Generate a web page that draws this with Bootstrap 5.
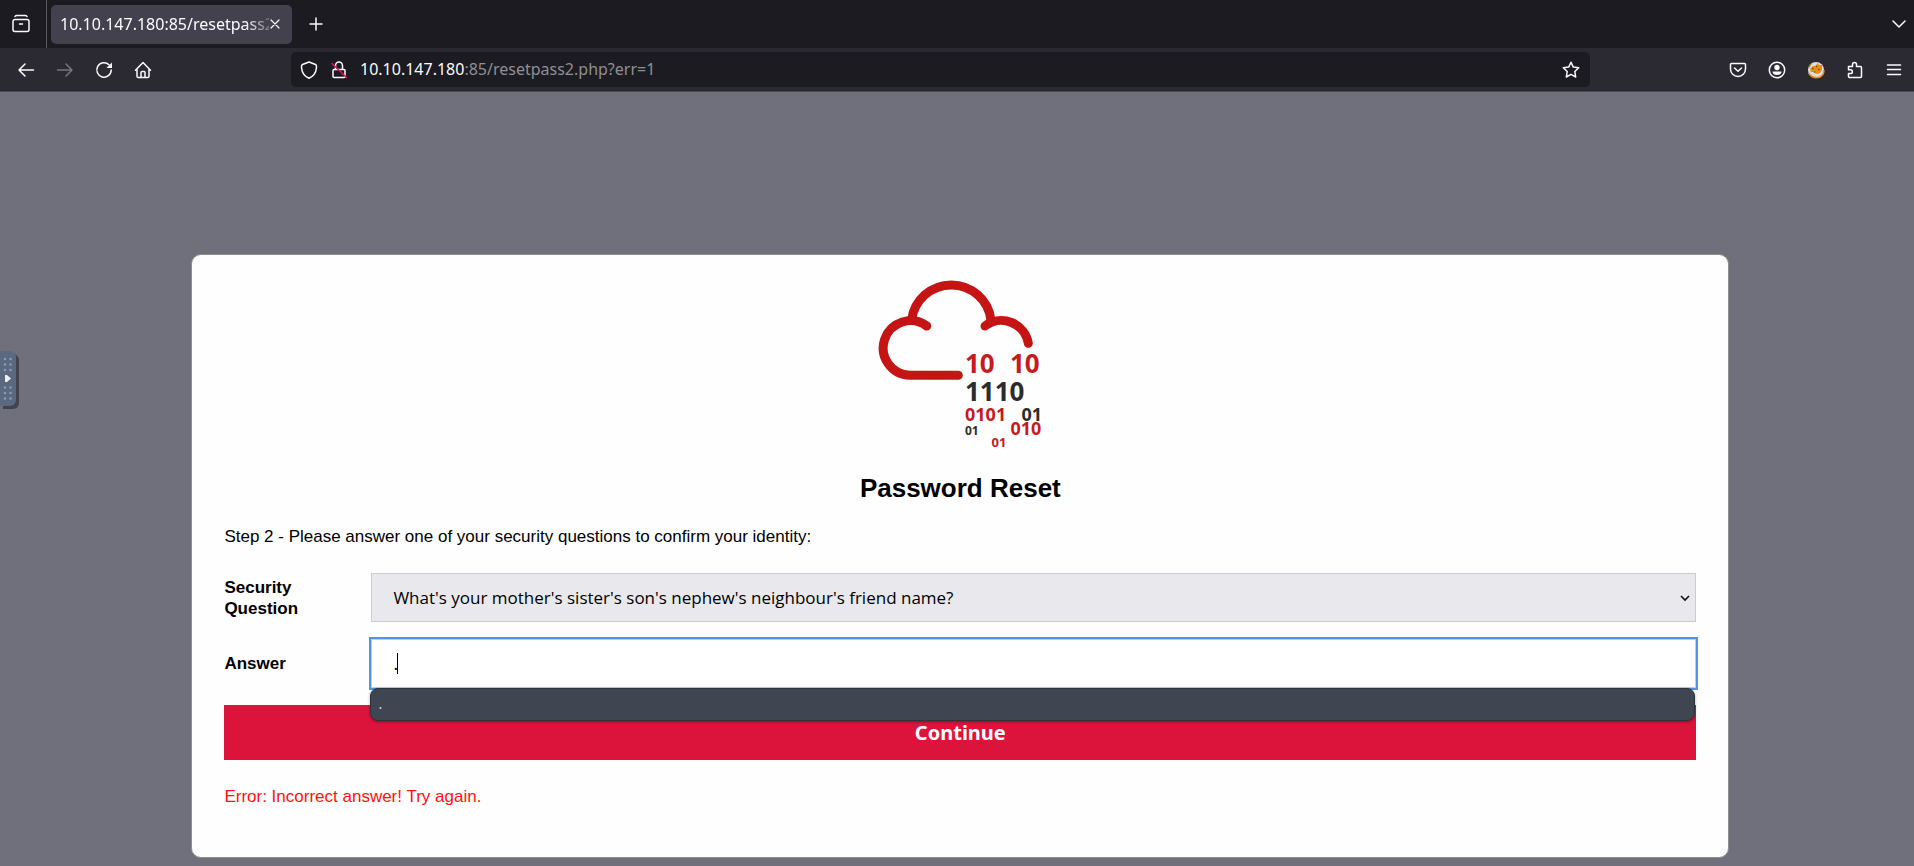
<!DOCTYPE html>
<html lang="en">
<head>
<meta charset="utf-8">
<meta name="viewport" content="width=device-width, initial-scale=1">
<title>Password Reset</title>
<link href="https://cdn.jsdelivr.net/npm/bootstrap@5.3.0/dist/css/bootstrap.min.css" rel="stylesheet">
<style>
  body { background: #70707c; color: #000; font-family: "Liberation Sans", Arial, sans-serif; font-size: 17px; line-height: 21px; }
  .ui-font { font-family: "Noto Sans", "Open Sans", sans-serif; }
  svg { display: block; flex: none; }

  /* browser window */
  .tab-strip { height: 48px; background: #1c1b22; color: #fbfbfe; }
  .tool-strip { height: 44px; background: #2b2a33; color: #fbfbfe; border-bottom: 1px solid #4a4956; }
  .icon-btn { width: 39px; height: 32px; padding: 0; border: 0; background: none; color: inherit; display: flex; align-items: center; justify-content: center; flex: none; }
  .icon-btn:disabled { color: #77767e; }
  .view-cell { width: 47px; border-right: 1px solid #5b5a63; }
  .page-tab { width: 241px; height: 39px; margin-left: 4px; padding: 0 9px; border-radius: 5px; background: #42414d; font-size: 16px; }
  .tab-title { width: 209px; -webkit-mask-image: linear-gradient(to right, #000 185px, transparent 218px); mask-image: linear-gradient(to right, #000 185px, transparent 218px); }
  .tab-close { width: 12px; }
  .nav-icons { width: 291px; padding-left: 6px; }
  .side-icons { width: 324px; padding-right: 1px; }
  .url-bar { height: 35px; border-radius: 5px; background: #1c1b22; font-size: 16px; padding-left: 9px; }
  .url-icon { width: 30px; }
  .url-rest { color: #8f8f94; }
  .line-icon { fill: none; stroke: currentColor; stroke-width: 1.5; stroke-linecap: round; stroke-linejoin: round; }

  /* reset form */
  .reset-card { width: 80.35%; margin: 162px 0 7px 10%; padding: 24px 32px 50px; background: #fefefe; border: 1px solid #8e8e8c; border-radius: 10px; }
  .reset-title { margin: 21px 0 22px; font-size: 26px; line-height: 32px; font-weight: 700; }
  .step-text { margin-bottom: 26px; }
  .field-row { margin-bottom: 17px; }
  .field-label { width: 147px; font-weight: 700; flex: none; }
  .field-box { height: 49px; border: 1px solid #ccc; border-radius: 0; padding: 0 21px; color: #000; font-size: 17px; }
  .question-box { appearance: none; font-family: "Open Sans", "Noto Sans", sans-serif; background: #e9e9ed url("data:image/svg+xml,%3Csvg xmlns='http://www.w3.org/2000/svg' viewBox='0 0 10 8'%3E%3Cpath d='M1 2l4 4 4-4' fill='none' stroke='%23111' stroke-width='1.6'/%3E%3C/svg%3E") no-repeat right 5px center / 10px 8px; }
  .answer-box { background: #fff; outline: 2px solid #5294e2; }
  .caret-line { left: 26px; top: 14px; width: 1px; height: 21px; background: #000; }
  .suggest-list { left: -1px; right: 1px; top: 49px; height: 33px; padding: 4px 7px; background: #404552; border: 1px solid #2f3240; border-radius: 8px; color: #d3dae3; font-size: 14px; box-shadow: 0 1px 3px rgba(0,0,0,.35); z-index: 2; }
  .suggest-item { color: inherit; line-height: 21px; }
  .continue-btn { height: 55px; border: 0; background: #dc143c; color: #fff; font-size: 20px; font-weight: 700; line-height: 28px; }
  .error-text { margin: 26px 0 0; color: #f11; }

  /* drawer handle on the left edge of the window */
  .drawer-handle { left: 0; top: 351px; width: 16px; height: 55px; border: 0; padding: 0; border-radius: 0 6px 6px 0; background: #5b6980; box-shadow: 3px 3px 0 #42434c; }
</style>
</head>
<body>
<header class="ui-font">
  <div class="tab-strip d-flex align-items-center">
    <div class="view-cell h-100 d-flex align-items-center">
      <button class="icon-btn w-100 pe-1" aria-label="View recent tabs"><svg class="line-icon" width="20" height="20" viewBox="0 0 20 20"><path d="M4 2.500C4.500 1.500 5 1.500 6 1.500H14C15 1.500 15.500 1.500 16 2.500M4 5.500H16A2 2 0 0 1 18 7.500V15.500A2 2 0 0 1 16 17.500H4A2 2 0 0 1 2 15.500V7.500A2 2 0 0 1 4 5.500ZM8.500 10H11.500"/></svg></button>
    </div>
    <div class="page-tab d-flex align-items-center">
      <span class="tab-title flex-shrink-0 text-nowrap overflow-hidden">10.10.147.180:85/resetpass2</span>
      <button class="icon-btn tab-close" aria-label="Close tab"><svg class="line-icon" width="10" height="10" viewBox="0 0 10 10"><path stroke-width="1.2" d="M1 1l8 8M9 1L1 9"/></svg></button>
    </div>
    <button class="icon-btn ms-1" aria-label="New tab"><svg class="line-icon" width="14" height="14" viewBox="0 0 14 14"><path d="M7 1v12M1 7h12"/></svg></button>
    <button class="icon-btn ms-auto" aria-label="List all tabs"><svg class="line-icon ms-2" width="14" height="8" viewBox="0 0 14 8"><path d="M1 1l6 6 6-6"/></svg></button>
  </div>
  <div class="tool-strip d-flex align-items-center">
    <nav class="nav-icons d-flex flex-shrink-0" aria-label="Navigation">
      <button class="icon-btn" aria-label="Back"><svg class="line-icon" width="18" height="16" viewBox="0 0 18 16"><path d="M8 2L2 8l6 6M2 8h14.500"/></svg></button>
      <button class="icon-btn" disabled aria-label="Forward"><svg class="line-icon" width="18" height="16" viewBox="0 0 18 16"><path d="M10 2l6 6-6 6M16 8H1.500"/></svg></button>
      <button class="icon-btn" aria-label="Reload"><svg class="line-icon" width="18" height="18" viewBox="0 0 18 18"><path d="M14 3.800A7.200 7.200 0 1 0 16.200 9"/><path fill="currentColor" stroke="none" d="M17 1.500V7H11.500Z"/></svg></button>
      <button class="icon-btn" aria-label="Home"><svg class="line-icon" width="18" height="18" viewBox="0 0 18 18"><path d="M1.500 9.200L9 1.500l7.500 7.700M3 8v7.500A1.200 1.200 0 0 0 4.200 16.500H13.800A1.200 1.200 0 0 0 15 15.500V8M7 16.500V11.500A1 1 0 0 1 8 10.500H10A1 1 0 0 1 11 11.500V16.500"/></svg></button>
    </nav>
    <div class="url-bar d-flex align-items-center flex-grow-1">
      <span class="url-icon"><svg class="line-icon" width="18" height="20" viewBox="0 0 18 20"><path d="M9 2L15.500 4.500C17 5.200 16.500 6 16.400 8C16 12.500 14.200 16 9 18.200C3.800 16 2 12.500 1.600 8C1.500 6 1 5.200 2.500 4.500Z"/></svg></span>
      <span class="url-icon"><svg class="line-icon" width="18" height="20" viewBox="0 0 18 20"><path d="M4 9.500H14A1 1 0 0 1 15 10.500V16.500A1 1 0 0 1 14 17.500H4A1 1 0 0 1 3 16.500V10.500A1 1 0 0 1 4 9.500ZM5.500 9.500V5.500A3.500 3.500 0 0 1 12.500 5.500V9.500"/><path stroke="#e3134a" d="M2 3.500L16.500 17.500"/></svg></span>
      <div class="flex-grow-1 text-nowrap" role="textbox" aria-label="Address">10.10.147.180<span class="url-rest">:85/resetpass2.php?err=1</span></div>
      <button class="icon-btn" aria-label="Bookmark this page"><svg class="line-icon" width="18" height="18" viewBox="0 0 18 18"><path d="M9 1.300L11.300 6.100L16.700 6.800L12.800 10.500L13.700 16L9 13.400L4.300 16L5.200 10.500L1.300 6.800L6.700 6.100Z"/></svg></button>
    </div>
    <div class="side-icons d-flex justify-content-end flex-shrink-0">
      <button class="icon-btn" aria-label="Save to Pocket"><svg class="line-icon" width="18" height="18" viewBox="0 0 18 18"><path d="M2.500 2.500H15.500A1 1 0 0 1 16.500 3.500V8A7.500 7.500 0 0 1 1.500 8V3.500A1 1 0 0 1 2.500 2.500ZM5.500 7L9 10.300L12.500 7"/></svg></button>
      <button class="icon-btn" aria-label="Account"><svg class="line-icon" width="18" height="18" viewBox="0 0 18 18"><circle cx="9" cy="9" r="7.700"/><g fill="currentColor" stroke="none"><circle cx="9" cy="6.500" r="2.700"/><path d="M4.500 10.500H13.500C13.500 13 11.500 14 9 14S4.500 13 4.500 10.500Z"/></g></svg></button>
      <button class="icon-btn" aria-label="FoxyProxy"><svg width="18" height="18" viewBox="0 0 18 18"><circle cx="9" cy="9" r="8" fill="#d9dde0"/><path fill="#f08c0c" d="M3 8L6 5L8 5L11 2L12 4L15 4V9L13 12L10 13L6 11L4 11Z"/><path d="M1.500 12Q6 18.500 13 16Q17 14 17 9" stroke="#ed8a19" stroke-width="1.400" fill="none"/><path stroke="#6c4722" stroke-width="1.100" d="M5 7l1.500 1M9 5l1 1M11 8l1.500 1M7 11h1.500"/><path stroke="#a77735" stroke-width="1.300" d="M1.500 7L4 3"/></svg></button>
      <button class="icon-btn" aria-label="Extensions"><svg class="line-icon" width="18" height="18" viewBox="0 0 18 18"><path d="M2.500 5.500H6.500V3.500A2 2 0 0 1 10.500 3.500V5.500H14.500A1 1 0 0 1 15.500 6.500V15.500A1 1 0 0 1 14.500 16.500H3.500A1 1 0 0 1 2.500 15.500V12.500H4.500A1.800 1.800 0 0 0 4.500 8.800H2.500Z"/></svg></button>
      <button class="icon-btn" aria-label="Menu"><svg class="line-icon" width="16" height="16" viewBox="0 0 16 16"><path d="M1.500 3h13M1.500 7.500h13M1.500 12.500h13"/></svg></button>
    </div>
  </div>
</header>

<main class="overflow-hidden">
  <form class="reset-card d-flex flex-column">
    <svg class="align-self-center" width="166" height="172" viewBox="0 0 166 172" role="img" aria-label="Cloud logo">
      <g fill="none" stroke="#c51414" stroke-width="9" stroke-linecap="round">
        <path d="M81.300 96.300H33A27.300 27.300 0 1 1 49.700 47"/>
        <path stroke-linecap="butt" d="M34.600 41A40 40 0 0 1 114 41"/>
        <path d="M108 47A27.300 27.300 0 0 1 151.300 64.300"/>
      </g>
      <g class="ui-font" font-weight="700" fill="#c51a1e">
        <text x="88" y="93.700" font-size="26">10</text>
        <text x="133" y="93.700" font-size="26">10</text>
        <text x="88" y="122" font-size="26" fill="#2b2c2c">1110</text>
        <text x="88" y="141.500" font-size="18">0101</text>
        <text x="144.500" y="141.500" font-size="18" fill="#2b2c2c">01</text>
        <text x="133.500" y="156.200" font-size="18">010</text>
        <text x="88" y="156.200" font-size="12" fill="#2b2c2c">01</text>
        <text x="114.500" y="168" font-size="13">01</text>
      </g>
    </svg>
    <h1 class="reset-title text-center">Password Reset</h1>
    <p class="step-text">Step 2 - Please answer one of your security questions to confirm your identity:</p>
    <div class="field-row d-flex align-items-center">
      <label class="field-label pe-5" for="question">Security Question</label>
      <select class="field-box question-box flex-grow-1" id="question">
        <option>What's your mother's sister's son's nephew's neighbour's friend name?</option>
      </select>
    </div>
    <div class="field-row d-flex align-items-center">
      <label class="field-label" for="answer">Answer</label>
      <div class="position-relative flex-grow-1">
        <input class="field-box answer-box ui-font d-block w-100" id="answer" type="text" value="." autocomplete="off">
        <span class="caret-line position-absolute"></span>
        <div class="suggest-list ui-font position-absolute" role="listbox"><div class="suggest-item" role="option">.</div></div>
      </div>
    </div>
    <button class="continue-btn ui-font w-100" type="button">Continue</button>
    <p class="error-text">Error: Incorrect answer! Try again.</p>
  </form>
</main>

<button class="drawer-handle position-absolute" aria-label="Open drawer">
  <svg width="16" height="55" viewBox="0 0 16 55"><g fill="#8d99ab"><circle cx="5" cy="8" r="1.300"/><circle cx="10.500" cy="8" r="1.300"/><circle cx="5" cy="13.500" r="1.300"/><circle cx="10.500" cy="13.500" r="1.300"/><circle cx="5" cy="19" r="1.300"/><circle cx="10.500" cy="19" r="1.300"/><circle cx="5" cy="36.500" r="1.300"/><circle cx="10.500" cy="36.500" r="1.300"/><circle cx="5" cy="42" r="1.300"/><circle cx="10.500" cy="42" r="1.300"/><circle cx="5" cy="47.500" r="1.300"/><circle cx="10.500" cy="47.500" r="1.300"/></g><path fill="#eee" d="M5 24H7L11 27.500L7 31H5Z"/></svg>
</button>
<script src="https://cdn.jsdelivr.net/npm/bootstrap@5.3.0/dist/js/bootstrap.bundle.min.js"></script>
</body>
</html>
